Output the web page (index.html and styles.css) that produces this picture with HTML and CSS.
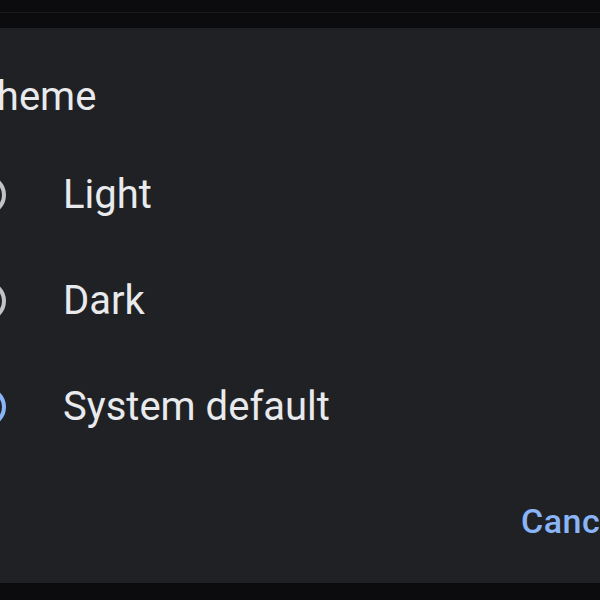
FILE: index.html
```html
<!DOCTYPE html>
<html lang="en">
<head>
    <meta charset="UTF-8">
    <meta name="viewport" content="width=device-width, initial-scale=1.0">
    <title>Theme</title>
    <link rel="stylesheet" href="styles.css">
</head>
<body>
    <div class="screen">
        <div class="topbar"></div>
        <div class="topbar-low"></div>
        <div class="dialog">
            <h2 class="dialog-title">Theme</h2>
            <div class="options">
                <label class="option">
                    <span class="radio"></span>
                    <span class="option-text">Light</span>
                </label>
                <label class="option">
                    <span class="radio"></span>
                    <span class="option-text">Dark</span>
                </label>
                <label class="option">
                    <span class="radio checked"></span>
                    <span class="option-text">System default</span>
                </label>
            </div>
            <div class="actions">
                <button class="text-btn">Cancel</button>
                <button class="text-btn">OK</button>
            </div>
        </div>
    </div>
</body>
</html>
```
FILE: styles.css
```css
body {
    margin: 0;
    padding: 0;
    background-color: #0c0c0e;
    font-family: Roboto, "Liberation Sans", sans-serif;
    overflow: hidden;
}
.screen {
    width: 600px;
    height: 600px;
    overflow: hidden;
}
.topbar {
    height: 12px;
    border-bottom: 1px solid #19191c;
}
.topbar-low {
    height: 15px;
}
.dialog {
    background-color: #202124;
    margin-left: -85px;
    width: 830px;
    height: 555px;
    padding-top: 45px;
    box-sizing: border-box;
}
.dialog-title {
    margin: 0 0 21px 58px;
    font-size: 40px;
    font-weight: 400;
    line-height: 48px;
    color: #e8eaed;
}
.options {
    display: flex;
    flex-direction: column;
}
.option {
    display: flex;
    align-items: center;
    height: 106px;
    padding-left: 51px;
    gap: 57px;
}
.radio {
    width: 40px;
    height: 40px;
    box-sizing: border-box;
    border: 4px solid #c2c3c6;
    border-radius: 50%;
    display: flex;
    align-items: center;
    justify-content: center;
    flex-shrink: 0;
}
.radio.checked {
    border-color: #8ab4f8;
}
.radio.checked::after {
    content: "";
    width: 20px;
    height: 20px;
    border-radius: 50%;
    background-color: #8ab4f8;
}
.option-text {
    font-size: 40px;
    line-height: 106px;
    color: #e8eaed;
}
.actions {
    display: flex;
    justify-content: flex-end;
    gap: 40px;
    padding-right: 31px;
    margin-top: 37px;
}
.text-btn {
    background: none;
    border: none;
    padding: 0;
    font-family: Roboto, "Liberation Sans", sans-serif;
    font-size: 34px;
    font-weight: 500;
    letter-spacing: 0.5px;
    line-height: 48px;
    color: #8ab4f8;
}
```
